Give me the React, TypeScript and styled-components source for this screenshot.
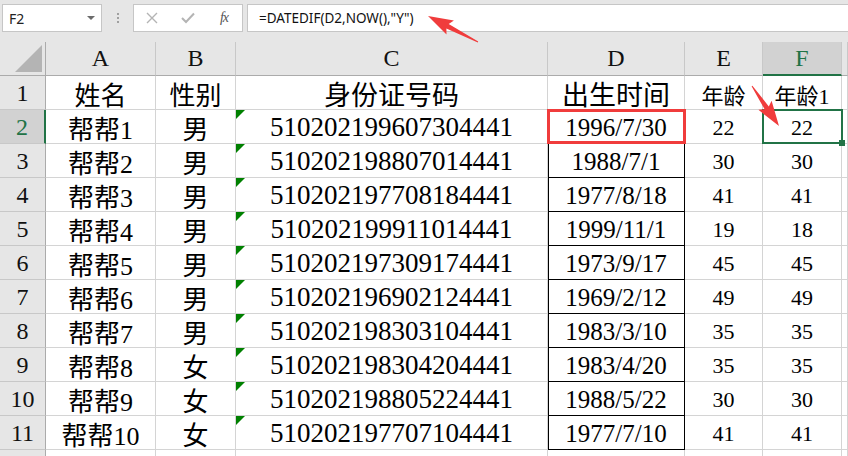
import React from "react"
import styled, { createGlobalStyle } from "styled-components"

const GlobalStyle = createGlobalStyle`
  html, body {
    margin: 0;
    padding: 0;
    background: #fff;
    overflow: hidden;
  }
`

const SERIF = `"Liberation Serif", "Noto Sans CJK SC", serif`
const SANS = `"Noto Sans", "Liberation Sans", "Noto Sans CJK SC", sans-serif`
const GREEN = "#217346"

const Page = styled.div`
  position: relative;
  width: 848px;
  height: 456px;
  overflow: hidden;
`

const Toolbar = styled.div`
  display: flex;
  align-items: flex-start;
  height: 42px;
  padding: 4px 0 0 2px;
  box-sizing: border-box;
  background: #e6e6e6;
  font-family: ${SANS};
`

const Box = styled.div<{ $width?: string }>`
  display: flex;
  align-items: center;
  height: 28px;
  box-sizing: border-box;
  background: #fff;
  border: 1px solid #c6c6c6;
  ${({ $width }) => ($width ? `width: ${$width};` : "flex: 1; border-right: none;")}
`

const NameText = styled.span`
  flex: 1;
  padding-left: 6px;
  font-size: 14px;
  color: #222;
`

const DropArrow = styled.span`
  width: 0;
  height: 0;
  margin-right: 6px;
  border-left: 4px solid transparent;
  border-right: 4px solid transparent;
  border-top: 4px solid #6b6b6b;
`

const Dots = styled.div`
  display: flex;
  flex-direction: column;
  align-items: center;
  justify-content: center;
  gap: 2px;
  width: 31px;
  height: 28px;

  span {
    width: 2px;
    height: 2px;
    background: #a0a0a0;
  }
`

const IconSlot = styled.div`
  display: flex;
  align-items: center;
  justify-content: center;
  width: 36px;
  height: 100%;
`

const Fx = styled.span`
  font-family: ${SERIF};
  font-style: italic;
  font-size: 14px;
  color: #555;
  letter-spacing: -1px;
`

const FormulaText = styled.span`
  padding-left: 11px;
  font-size: 13.5px;
  color: #111;
`

const Gap = styled.div`
  width: 4px;
`

const Sheet = styled.div`
  display: grid;
  grid-template-columns: 46px 110px 80px 312px 137px 78px 79px 1fr;
  grid-auto-rows: 34px;
  font-family: ${SERIF};
`

const ColHead = styled.div<{ $active?: boolean }>`
  display: flex;
  align-items: center;
  justify-content: center;
  box-sizing: border-box;
  font-size: 24px;
  background: ${({ $active }) => ($active ? "#d2d2d2" : "#e6e6e6")};
  color: ${({ $active }) => ($active ? GREEN : "#111")};
  border-right: 1px solid #c8c8c8;
  border-bottom: ${({ $active }) => ($active ? `2px solid ${GREEN}` : "1px solid #ababab")};
  padding-top: ${({ $active }) => ($active ? "1px" : "0")};
`

const Corner = styled.div`
  position: relative;
  background: #e6e6e6;
  border-right: 1px solid #ababab;
  border-bottom: 1px solid #ababab;
  box-sizing: border-box;

  &::after {
    content: "";
    position: absolute;
    right: 3px;
    bottom: 3px;
    width: 0;
    height: 0;
    border-left: 27px solid transparent;
    border-bottom: 27px solid #b4b4b4;
  }
`

const RowHead = styled.div<{ $active?: boolean }>`
  display: flex;
  align-items: center;
  justify-content: center;
  box-sizing: border-box;
  font-size: 24px;
  padding-top: 2px;
  background: ${({ $active }) => ($active ? "#d2d2d2" : "#e6e6e6")};
  color: ${({ $active }) => ($active ? GREEN : "#111")};
  border-right: ${({ $active }) => ($active ? `2px solid ${GREEN}` : "1px solid #ababab")};
  border-bottom: 1px solid #c8c8c8;
`

const Cell = styled.div<{ $size?: number; $boxed?: boolean; $flag?: boolean }>`
  position: relative;
  display: flex;
  align-items: center;
  justify-content: center;
  box-sizing: border-box;
  padding-top: 2px;
  white-space: nowrap;
  font-size: ${({ $size }) => $size ?? 24}px;
  color: #000;
  border-right: 1px solid ${({ $boxed }) => ($boxed ? "#000" : "#d4d4d4")};
  border-bottom: 1px solid ${({ $boxed }) => ($boxed ? "#000" : "#d4d4d4")};
  ${({ $boxed }) => ($boxed ? "box-shadow: inset 1px 0 0 #000;" : "")}

  ${({ $flag }) =>
    $flag
      ? `&::before {
    content: "";
    position: absolute;
    left: 0;
    top: 0;
    width: 0;
    height: 0;
    border-top: 9px solid #008000;
    border-right: 9px solid transparent;
  }`
      : ""}
`

const RedFrame = styled.div`
  position: absolute;
  z-index: 2;
  inset: -1px -2px -1px -1px;
  border: 3px solid #f03c3c;
  pointer-events: none;
`

const Selection = styled.div`
  position: absolute;
  z-index: 2;
  inset: -1px -2px -1px -1px;
  border: 2px solid ${GREEN};
  pointer-events: none;

  &::after {
    content: "";
    position: absolute;
    right: -4px;
    bottom: -4px;
    width: 6px;
    height: 6px;
    background: ${GREEN};
  }
`

const Overlay = styled.svg`
  position: absolute;
  z-index: 3;
  left: 0;
  top: 0;
  pointer-events: none;
`

const columns = ["A", "B", "C", "D", "E", "F", ""]

const rows: string[][] = [
  ["姓名", "性别", "身份证号码", "出生时间", "年龄", "年龄1"],
  ["帮帮1", "男", "510202199607304441", "1996/7/30", "22", "22"],
  ["帮帮2", "男", "510202198807014441", "1988/7/1", "30", "30"],
  ["帮帮3", "男", "510202197708184441", "1977/8/18", "41", "41"],
  ["帮帮4", "男", "510202199911014441", "1999/11/1", "19", "18"],
  ["帮帮5", "男", "510202197309174441", "1973/9/17", "45", "45"],
  ["帮帮6", "男", "510202196902124441", "1969/2/12", "49", "49"],
  ["帮帮7", "男", "510202198303104441", "1983/3/10", "35", "35"],
  ["帮帮8", "女", "510202198304204441", "1983/4/20", "35", "35"],
  ["帮帮9", "女", "510202198805224441", "1988/5/22", "30", "30"],
  ["帮帮10", "女", "510202197707104441", "1977/7/10", "41", "41"],
  ["", "", "", "", "", ""],
]

const sizes = [26, 26, 27, 25, 22, 22]

// tapered arrow from tail to tip
const arrowPoints = (tx: number, ty: number, hx: number, hy: number) => {
  const dx = hx - tx
  const dy = hy - ty
  const len = Math.hypot(dx, dy)
  const ux = dx / len
  const uy = dy / len
  const nx = -uy
  const ny = ux
  const head = 22
  const bx = hx - ux * head
  const by = hy - uy * head
  const p = (x: number, y: number) => `${x.toFixed(1)},${y.toFixed(1)}`
  return [
    p(tx + nx * 0.5, ty + ny * 0.5),
    p(bx + nx * 2.5, by + ny * 2.5),
    p(bx - ux * 3 + nx * 8, by - uy * 3 + ny * 8),
    p(hx, hy),
    p(bx - ux * 3 - nx * 8, by - uy * 3 - ny * 8),
    p(bx - nx * 2.5, by - ny * 2.5),
    p(tx - nx * 0.5, ty - ny * 0.5),
  ].join(" ")
}

export default function App() {
  return (
    <Page>
      <GlobalStyle />
      <Toolbar>
        <Box $width="100px">
          <NameText>F2</NameText>
          <DropArrow />
        </Box>
        <Dots>
          <span />
          <span />
          <span />
        </Dots>
        <Box $width="110px">
          <IconSlot>
            <svg width="12" height="12" viewBox="0 0 12 12">
              <path d="M1 1L11 11M11 1L1 11" stroke="#b4b4b4" strokeWidth="1.4" />
            </svg>
          </IconSlot>
          <IconSlot>
            <svg width="14" height="12" viewBox="0 0 14 12">
              <path d="M1 6L5 10L13 1.5" stroke="#b4b4b4" strokeWidth="2" fill="none" />
            </svg>
          </IconSlot>
          <IconSlot>
            <Fx>fx</Fx>
          </IconSlot>
        </Box>
        <Gap />
        <Box>
          <FormulaText>=DATEDIF(D2,NOW(),"Y")</FormulaText>
        </Box>
      </Toolbar>

      <Sheet>
        <Corner />
        {columns.map((c) => (
          <ColHead key={"h" + c} $active={c === "F"}>
            {c}
          </ColHead>
        ))}
        {rows.map((row, r) => (
          <React.Fragment key={r}>
            <RowHead $active={r === 1}>{r < 11 ? r + 1 : ""}</RowHead>
            {row.map((v, c) => (
              <Cell
                key={c}
                $size={r === 0 && c === 3 ? 27 : sizes[c]}
                $boxed={c === 3 && r > 0 && r < 11}
                $flag={c === 2 && r > 0 && r < 11}
              >
                {v}
                {r === 1 && c === 3 && <RedFrame />}
                {r === 1 && c === 5 && <Selection />}
              </Cell>
            ))}
            <Cell />
          </React.Fragment>
        ))}
      </Sheet>

      <Overlay width="848" height="456">
        <polygon points={arrowPoints(478, 42, 428, 16)} fill="#f03c3c" />
        <polygon points={arrowPoints(752, 86, 779, 126)} fill="#f03c3c" />
      </Overlay>
    </Page>
  )
}
